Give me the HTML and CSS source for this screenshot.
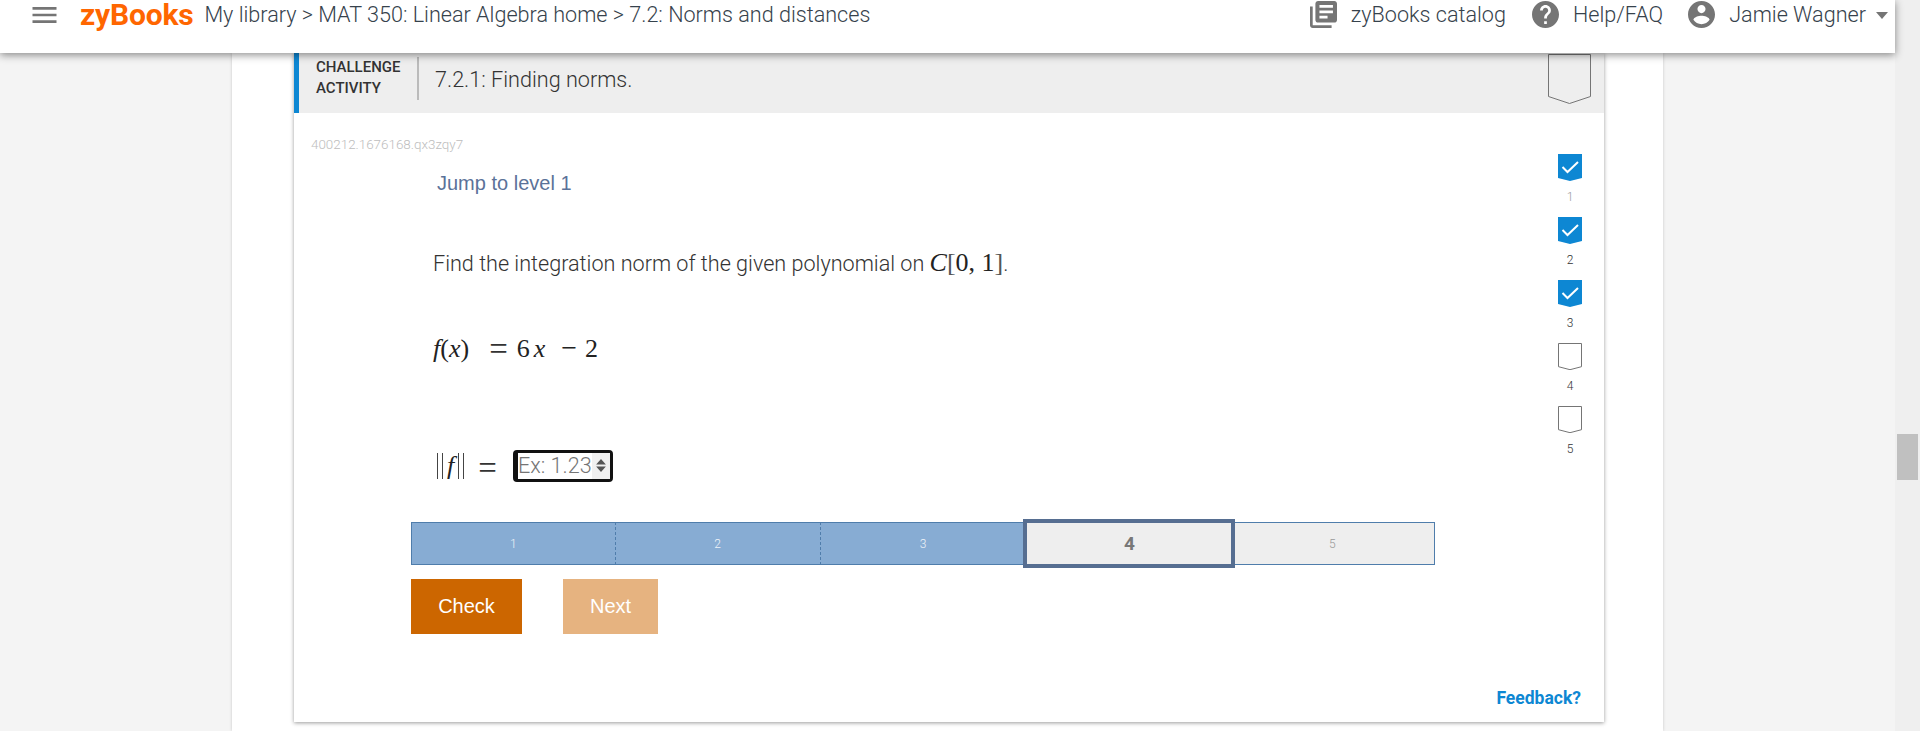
FILE: index.html
```html
<!DOCTYPE html>
<html lang="en">
<head>
<meta charset="utf-8">
<title>7.2: Norms and distances</title>
<link rel="stylesheet" href="styles.css">
</head>
<body>
<div class="page">
  <header class="topbar">
    <svg class="menu-icon" viewBox="3 6 18 12"><path d="M3 18h18v-2H3v2zm0-5h18v-2H3v2zm0-7v2h18V6H3z"/></svg>
    <span class="logo">zyBooks</span>
    <nav class="crumbs">My library &gt; MAT 350: Linear Algebra home &gt; 7.2: Norms and distances</nav>
    <div class="top-links">
      <svg class="top-icon" viewBox="2 2 20 20"><path d="M4 6H2v14c0 1.1.9 2 2 2h14v-2H4V6zm16-4H8c-1.1 0-2 .9-2 2v12c0 1.1.9 2 2 2h12c1.1 0 2-.9 2-2V4c0-1.1-.9-2-2-2zm-1 9H9V9h10v2zm-4 4H9v-2h6v2zm4-8H9V5h10v2z"/></svg>
      <span class="top-text catalog">zyBooks catalog</span>
      <svg class="top-icon" viewBox="2 2 20 20"><path d="M12 2C6.48 2 2 6.48 2 12s4.48 10 10 10 10-4.48 10-10S17.52 2 12 2zm1 17h-2v-2h2v2zm2.07-7.75l-.9.92C13.45 12.9 13 13.5 13 15h-2v-.5c0-1.1.45-2.1 1.17-2.83l1.24-1.26c.37-.36.59-.86.59-1.41 0-1.1-.9-2-2-2s-2 .9-2 2H8c0-2.21 1.79-4 4-4s4 1.79 4 4c0 .88-.36 1.68-.93 2.25z"/></svg>
      <span class="top-text help">Help/FAQ</span>
      <svg class="top-icon" viewBox="2 2 20 20"><path d="M12 2C6.48 2 2 6.48 2 12s4.48 10 10 10 10-4.48 10-10S17.52 2 12 2zm0 3c1.66 0 3 1.34 3 3s-1.34 3-3 3-3-1.34-3-3 1.34-3 3-3zm0 14.2c-2.5 0-4.71-1.28-6-3.22.03-1.99 4-3.08 6-3.08 1.99 0 5.97 1.09 6 3.08-1.29 1.94-3.5 3.22-6 3.22z"/></svg>
      <span class="top-text user">Jamie Wagner</span>
      <span class="caret"></span>
    </div>
  </header>

  <main class="column">
    <section class="card">
      <div class="card-head">
        <div class="head-label">CHALLENGE<br>ACTIVITY</div>
        <div class="head-title">7.2.1: Finding norms.</div>
        <svg class="head-badge" viewBox="0 0 43 50"><path d="M.5.5h42v42L21.5 49.5.5 42.5z"/></svg>
      </div>
      <div class="card-body">
        <div class="content">
          <div class="seed">400212.1676168.qx3zqy7</div>
          <div class="jump">Jump to level 1</div>
          <p class="statement">Find the integration norm of the given polynomial on <span class="math math-inline"><i>C</i><span class="thin">[</span>0, 1<span class="thin">]</span></span>.</p>
          <p class="math equation"><i>f</i>(<i>x</i>)<span class="rel">=</span><span class="spaced">6<i>x</i></span><span class="bin">−</span>2</p>
          <div class="answer-row">
            <span class="math answer-label"><span class="bars"></span><i>f</i><span class="bars"></span><span class="rel">=</span></span>
            <div class="answer">
              <span class="placeholder">Ex: 1.23</span>
              <span class="spinner">
                <svg viewBox="0 0 9 12"><path d="M4.5 0 9 5H0zM0 7h9l-4.5 5z"/></svg>
              </span>
            </div>
          </div>
          <div class="levels">
            <div class="level done">1</div>
            <div class="level done">2</div>
            <div class="level done last-done">3</div>
            <div class="level current">4</div>
            <div class="level open">5</div>
          </div>
          <div class="actions">
            <button class="btn check">Check</button>
            <button class="btn next">Next</button>
          </div>
        </div>
        <aside class="progress">
          <div class="step"><svg class="flag filled" viewBox="0 0 24 27"><path d="M0 0h24v24L12 27 0 24z"/><path class="tick" d="M4.500 13l5 5L20 8"/></svg><span class="step-num faint">1</span></div>
          <div class="step"><svg class="flag filled" viewBox="0 0 24 27"><path d="M0 0h24v24L12 27 0 24z"/><path class="tick" d="M4.500 13l5 5L20 8"/></svg><span class="step-num">2</span></div>
          <div class="step"><svg class="flag filled" viewBox="0 0 24 27"><path d="M0 0h24v24L12 27 0 24z"/><path class="tick" d="M4.500 13l5 5L20 8"/></svg><span class="step-num">3</span></div>
          <div class="step"><svg class="flag empty" viewBox="0 0 24 27"><path d="M.5.5h23v23.200l-11.500 3-11.500-3z"/></svg><span class="step-num">4</span></div>
          <div class="step"><svg class="flag empty" viewBox="0 0 24 27"><path d="M.5.5h23v23.200l-11.500 3-11.500-3z"/></svg><span class="step-num">5</span></div>
        </aside>
        <a class="feedback">Feedback?</a>
      </div>
    </section>
  </main>
</div>
<div class="scrollbar"><div class="thumb"></div></div>
</body>
</html>
```

FILE: styles.css
```css
* { box-sizing: border-box; }
html, body { height: 100%; }
body {
  margin: 0;
  display: flex;
  height: 731px;
  overflow: hidden;
  background: #f4f4f4;
  font-family: Roboto, "Liberation Sans", sans-serif;
  color: #333;
}
.page { flex: 1; min-width: 0; display: flex; flex-direction: column; }
.scrollbar { width: 25px; background: #efefef; padding: 434px 2px 0; }
.thumb { height: 46px; background: #c0c0c0; }

.topbar {
  position: relative;
  z-index: 2;
  height: 53px;
  flex: none;
  background: #fff;
  box-shadow: 0 2px 8px rgba(0,0,0,.45);
  display: flex;
  align-items: flex-start;
  padding-left: 32px;
}
.menu-icon { width: 25px; height: 16px; margin-top: 7px; fill: #757575; }
.logo {
  margin-left: 23px;
  font-size: 30px;
  font-weight: 700;
  line-height: 30px;
  color: #f60;
  letter-spacing: -.2px;
}
.crumbs {
  margin-left: 11px;
  font-size: 21.6px;
  font-weight: 300;
  line-height: 30px;
  color: #36424c;
  white-space: nowrap;
}
.top-links { margin-left: auto; display: flex; align-items: flex-start; padding-right: 7px; }
.top-icon { width: 27px; height: 27px; margin-top: 1px; fill: #757575; }
.top-text { margin-left: 14px; font-size: 21.6px; font-weight: 300; line-height: 30px; color: #36424c; white-space: nowrap; }
.catalog { margin-right: 26px; }
.help { margin-right: 25px; }
.caret {
  margin: 12px 0 0 10px;
  border-style: solid;
  border-width: 7px 6px 0;
  border-color: #757575 transparent transparent;
}

.column {
  position: relative;
  z-index: 1;
  flex: 1;
  width: 1431px;
  align-self: center;
  background: #fff;
  padding: 0 59px 0 62px;
  box-shadow: 0 0 3px rgba(0,0,0,.18);
}
.card { height: 669px; background: #fff; box-shadow: 0 1px 4px rgba(0,0,0,.4); }
.card-head {
  height: 60px;
  background: #eee;
  border-left: 5px solid #0d87d3;
  display: flex;
  align-items: flex-start;
  padding-left: 17px;
  padding-top: 4px;
}
.head-label {
  width: 84px;
  font-size: 15px;
  font-weight: 500;
  line-height: 21px;
  color: #333;
  white-space: nowrap;
}
.head-title {
  margin-left: 17px;
  padding-left: 16px;
  border-left: 2px solid #bbb;
  height: 43px;
  font-size: 21.6px;
  font-weight: 300;
  line-height: 45px;
  color: #333;
}
.head-badge { margin: -3px 13px 0 auto; width: 43px; height: 50px; fill: none; stroke: #757575; }

.card-body { position: relative; display: flex; height: 609px; }
.content { flex: 1; min-width: 0; padding-left: 17px; }
.seed { margin-top: 25px; font-size: 13.4px; line-height: 14px; color: #bdbdbd; font-weight: 300; }
.jump { margin: 19px 0 0 126px; font-family: "Liberation Sans", sans-serif; font-size: 20px; line-height: 24px; color: #5b7299; }
.statement {
  margin: 51px 0 0 122px;
  font-size: 21.6px;
  font-weight: 300;
  line-height: 36px;
  color: #333;
}
.math { font-family: "Liberation Serif", serif; font-size: 26px; font-weight: 400; color: #222; }
.math-inline { line-height: 0; }
.thin { font-weight: 400; color: #555; }
.equation { margin: 49px 0 0 122px; line-height: 36px; }
.rel { margin: 0 9px 0 20px; font-size: 33px; font-weight: 300; line-height: 0; color: #333; vertical-align: -3px; }
.spaced { letter-spacing: 4px; }
.bin { margin: 0 8px 0 12px; font-size: 28px; line-height: 0; }
.answer-row { margin: 82px 0 0 122px; display: flex; align-items: center; height: 33px; }
.answer-label { width: 80px; white-space: nowrap; padding-left: 4px; display: flex; align-items: center; }
.bars { width: 6px; height: 26px; border-left: 1px solid #444; border-right: 1px solid #444; margin: 0 4px; }
.bars:first-child { margin-left: 0; }
.answer-label .rel { margin: 5px 0 0 10px; }
.answer {
  width: 100px;
  height: 32px;
  background: #fff;
  border: 3px solid #111;
  border-radius: 4px;
  display: flex;
  align-items: stretch;
}
.placeholder {
  width: 76px;
  border-left: 2px solid #111;
  font-size: 21.6px;
  font-weight: 300;
  line-height: 26px;
  color: #757575;
  white-space: nowrap;
  overflow: hidden;
}
.spinner { flex: 1; background: #f0f0f0; display: flex; align-items: center; justify-content: center; }
.spinner svg { width: 10px; height: 13px; fill: #555; }

.levels { margin: 40px 0 0 100px; width: 1024px; height: 43px; display: flex; }
.level {
  flex: none;
  width: 204.8px;
  height: 43px;
  display: flex;
  align-items: center;
  justify-content: center;
  font-size: 12px;
  font-weight: 300;
  border-top: 1px solid #4f7dab;
  border-bottom: 1px solid #4f7dab;
}
.done { background: #87acd3; color: #eef3f8; border-right: 1px dashed #4f7dab; }
.done:first-child { border-left: 1px solid #4f7dab; }
.last-done { border-right: 0; }
.current {
  width: 212px;
  height: 49px;
  margin: -3px -5px 0 -2px;
  position: relative;
  background: #eee;
  border: 4px solid #566e91;
  color: #777;
  font-size: 19px;
  font-weight: 700;
}
.open { background: #eee; color: #999; border-right: 1px solid #4f7dab; }
.actions { margin: 14px 0 0 100px; display: flex; gap: 41px; }
.btn {
  height: 55px;
  border: 0;
  padding: 0;
  color: #fff;
  font-family: "Liberation Sans", sans-serif;
  font-size: 20px;
}
.check { width: 111px; background: #c60; }
.next { width: 95px; background: #e6b380; }

.progress { width: 46px; padding-top: 41px; display: flex; flex-direction: column; }
.step { height: 63px; width: 24px; display: flex; flex-direction: column; align-items: center; }
.flag { width: 24px; height: 27px; flex: none; }
.filled { fill: #0d87d3; }
.tick { fill: none; stroke: #fff; stroke-width: 2; }
.empty { fill: none; stroke: #757575; }
.step-num { margin-top: 9px; font-size: 12px; font-weight: 300; line-height: 14px; color: #333; }
.faint { color: #999; }
.feedback {
  position: absolute;
  right: 23px;
  bottom: 14px;
  font-size: 17.5px;
  font-weight: 700;
  line-height: 20px;
  color: #0d87d3;
}
```
